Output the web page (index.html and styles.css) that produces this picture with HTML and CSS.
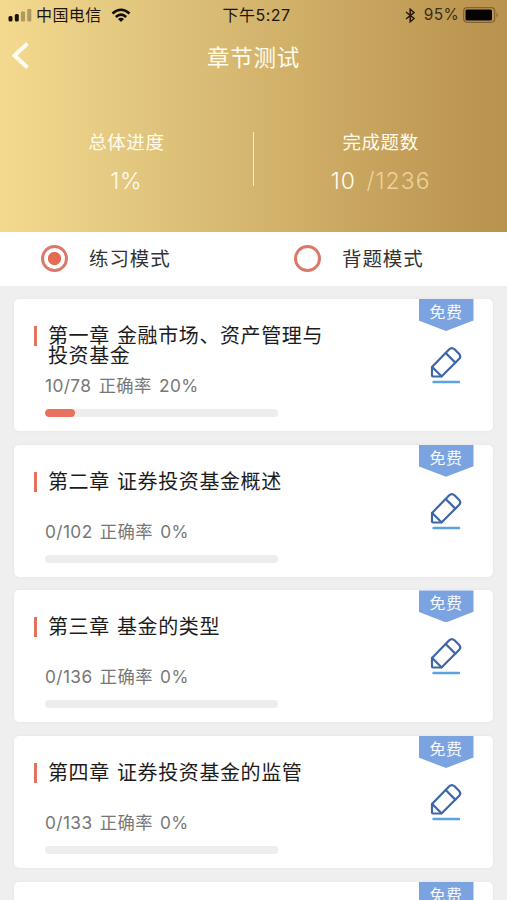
FILE: index.html
```html
<!DOCTYPE html>
<html lang="zh-CN">
<head>
<meta charset="utf-8">
<title>章节测试</title>
<link rel="stylesheet" href="styles.css">
</head>
<body>
<svg class="defs" aria-hidden="true">
  <symbol id="pencil" viewBox="0 0 34 40">
    <g fill="none" stroke="#3f66a8" stroke-width="2.200" stroke-linejoin="round" stroke-linecap="round">
      <path d="M3 21 20 3.500Q22.700 .800 25.500 3.300L30 7.800Q32.500 10.500 30 13L12.500 30.500H4Q3 30.500 3 29.500Z"/>
      <path d="M16.700 7 26.300 16.600M3.200 21 12.500 30.300"/>
    </g>
    <path d="M4.500 36H30" stroke="#5aa2e0" stroke-width="2.400" stroke-linecap="round"/>
  </symbol>
</svg>
<header class="hero">
  <div class="status">
    <div class="carrier">
      <svg class="signal" width="24" height="14" viewBox="0 0 24 14"><g fill="#17120a"><rect x="0.500" y="8" width="4" height="5.500" rx="1.500"/><rect x="6.800" y="6" width="4" height="7.500" rx="1.500"/></g><g fill="#78663c" opacity=".55"><rect x="13" y="3.500" width="4" height="10" rx="1"/><rect x="19.300" y="1" width="4" height="12.500" rx="1"/></g></svg>
      <span class="name">中国电信</span>
      <svg class="wifi" width="20" height="15" viewBox="0 0 20 15"><g fill="none" stroke="#100d06" stroke-width="2.600"><path d="M1.500 5.500Q10-2 18.500 5.500"/><path d="M4.800 9Q10 4.300 15.200 9"/></g><path d="M10 14 7 11Q10 8.600 13 11Z" fill="#100d06"/></svg>
    </div>
    <div class="time">下午5:27</div>
    <div class="power">
      <svg width="10" height="15" viewBox="0 0 10 15"><path d="M1 4 9 10.500 5.200 13.800V1.200L9 4.500 1 11" fill="none" stroke="#241b0c" stroke-width="1.500"/></svg>
      <span class="pct">95%</span>
      <svg width="36" height="16" viewBox="0 0 36 16"><rect x=".7" y=".7" width="31" height="14.600" rx="3.500" fill="none" stroke="#806436" stroke-width="1.200"/><rect x="2.500" y="2.500" width="26.500" height="11" rx="1.500" fill="#050402"/><path d="M33.500 5.500Q36 8 33.500 10.500Z" fill="#806436"/></svg>
    </div>
  </div>
  <div class="nav">
    <svg class="back" width="18" height="30" viewBox="0 0 18 30"><path d="M15.500 2.500 2.500 14.500 15.500 26.500" fill="none" stroke="#fffdf3" stroke-width="4"/></svg>
    <h1>章节测试</h1>
  </div>
  <div class="stats">
    <div class="stat"><div class="label">总体进度</div><div class="value">1%</div></div>
    <div class="rule"></div>
    <div class="stat"><div class="label">完成题数</div><div class="value count">10 <span class="total">/1236</span></div></div>
  </div>
</header>
<div class="modes">
  <div class="mode"><span class="radio on"></span><span class="mode-name">练习模式</span></div>
  <div class="mode"><span class="radio"></span><span class="mode-name">背题模式</span></div>
</div>
<main class="list">
  <section class="card">
    <div class="info"><h2>第一章 金融市场、资产管理与投资基金</h2><p>10/78 正确率 20%</p><div class="bar"><i style="width:12.800%"></i></div></div>
    <div class="side"><span class="tag">免费</span><svg class="edit"><use href="#pencil"/></svg></div>
  </section>
  <section class="card">
    <div class="info"><h2>第二章 证券投资基金概述</h2><p>0/102 正确率 0%</p><div class="bar"></div></div>
    <div class="side"><span class="tag">免费</span><svg class="edit"><use href="#pencil"/></svg></div>
  </section>
  <section class="card">
    <div class="info"><h2>第三章 基金的类型</h2><p>0/136 正确率 0%</p><div class="bar"></div></div>
    <div class="side"><span class="tag">免费</span><svg class="edit"><use href="#pencil"/></svg></div>
  </section>
  <section class="card">
    <div class="info"><h2>第四章 证券投资基金的监管</h2><p>0/133 正确率 0%</p><div class="bar"></div></div>
    <div class="side"><span class="tag">免费</span><svg class="edit"><use href="#pencil"/></svg></div>
  </section>
  <section class="card">
    <div class="info"></div>
    <div class="side"><span class="tag">免费</span></div>
  </section>
</main>
</body>
</html>
```
FILE: styles.css
```css
* { box-sizing: border-box; margin: 0; padding: 0; }
body {
  height: 900px;
  overflow: hidden;
  display: flex;
  flex-direction: column;
  background: #efefef;
  font-family: Inter, "Noto Sans CJK SC", sans-serif;
}
svg { display: block; flex: none; }
.defs { position: absolute; width: 0; height: 0; }
.hero {
  flex: none;
  height: 232px;
  color: #fffbee;
  background: linear-gradient(90deg, #f4da8f 0%, #e2c77f 26%, #d4b46c 52%, #c5a15b 77%, #b9924d 100%);
}
.status {
  height: 30px;
  display: grid;
  grid-template-columns: 1fr auto 1fr;
  align-items: center;
  padding: 0 8px;
  color: #1b150b;
  font-size: 16px;
  line-height: 30px;
}
.carrier, .power { display: flex; align-items: center; }
.name { margin: 0 9px 0 4px; letter-spacing: .4px; }
.time { padding-left: 6px; letter-spacing: .45px; }
.power { justify-content: flex-end; }
.pct { margin: 0 4px 0 9px; font-size: 15.500px; letter-spacing: .3px; color: #3b2c14; }
.nav {
  height: 52px;
  display: grid;
  grid-template-columns: 18px 1fr 18px;
  align-items: center;
  padding: 0 12px;
}
h1 { text-align: center; font-size: 22.500px; font-weight: 400; letter-spacing: .7px; }
.stats { display: flex; align-items: flex-start; padding-top: 46px; }
.stat { flex: 1; text-align: center; }
.label { font-size: 18.500px; line-height: 28px; letter-spacing: .6px; }
.value { margin-top: 10px; font-size: 23px; line-height: 30px; font-weight: 300; letter-spacing: .7px; word-spacing: 3px; }
.count { letter-spacing: 1px; }
.total { color: #ecd29a; }
.rule { width: 1.500px; height: 54px; margin-top: 4px; background: #f8ecd0; }
.modes { flex: none; height: 54px; display: flex; background: #fff; }
.mode {
  flex: 1;
  display: flex;
  align-items: center;
  padding-left: 41px;
  font-size: 19.500px;
  letter-spacing: .9px;
  color: #333;
}
.mode-name { padding-bottom: 3px; }
.radio {
  width: 27px;
  height: 27px;
  margin: 0 21px 1px 0;
  border: 3px solid #dc786a;
  border-radius: 50%;
}
.mode + .mode { padding-left: 40px; }
.on { background: radial-gradient(circle, #e66b55 0 6.200px, transparent 7px); }
.list { display: flex; flex-direction: column; gap: 13.700px; padding: 13px 14px 0; }
.card {
  flex: none;
  height: 132px;
  display: flex;
  justify-content: space-between;
  padding-right: 19px;
  border-radius: 5px;
  background: #fff;
  box-shadow: 0 0 3px #e2e2e2;
}
.info { width: 312px; padding-left: 20px; display: flex; flex-direction: column; }
h2 {
  height: 57px;
  margin-top: 27px;
  padding-left: 14px;
  background: linear-gradient(#e4705e, #e4705e) 0 0 / 3px 20px no-repeat;
  font-size: 20px;
  font-weight: 400;
  line-height: 20.400px;
  letter-spacing: .6px;
  word-spacing: 1px;
  color: #1c1c1c;
}
p {
  height: 28px;
  margin: -11px 0 0 11px;
  font-size: 17.300px;
  line-height: 28px;
  letter-spacing: .4px;
  word-spacing: 2px;
  color: #777;
}
.bar { width: 233px; height: 8px; margin: 9px 0 0 11px; border-radius: 4px; background: #ededed; overflow: hidden; }
.bar i { display: block; height: 8px; border-radius: 4px; background: #e8705f; }
.side { width: 56px; display: flex; flex-direction: column; align-items: center; }
.tag {
  width: 55px;
  height: 32px;
  color: #f5f9ff;
  background: #7ba3df;
  clip-path: polygon(0 0, 100% 0, 100% 67%, 50% 100%, 0 67%);
  text-align: center;
  font-size: 16px;
  line-height: 26px;
  letter-spacing: .5px;
}
.edit { width: 34px; height: 40px; margin-top: 15px; }
```
